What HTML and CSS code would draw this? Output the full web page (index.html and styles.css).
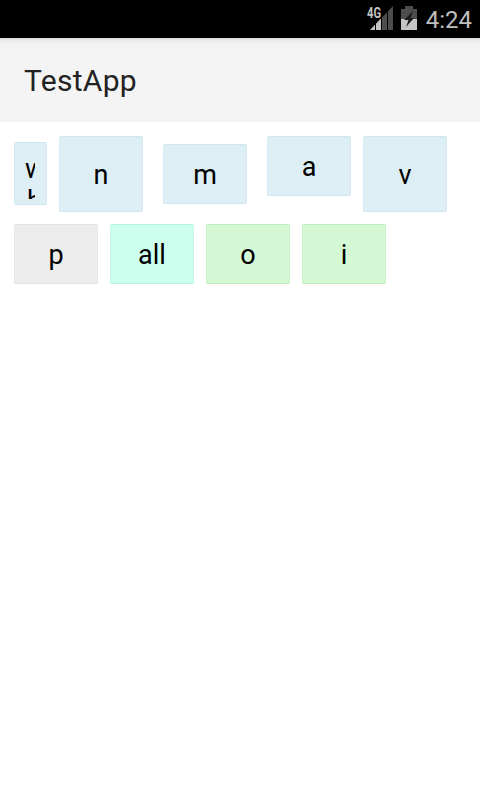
FILE: index.html
```html
<!DOCTYPE html>
<html lang="en">
<head>
<meta charset="utf-8">
<title>TestApp</title>
<link rel="stylesheet" href="styles.css">
</head>
<body>
<div class="status">
  <svg class="signal" width="28" height="26" viewBox="0 0 28 26">
    <path d="M3 25 26 1V25Z" fill="#4d4d4d"/>
    <path d="M3 25 14 13.5V25Z" fill="#c4c4c4"/>
    <path d="M8.5 17V25M14.5 11V25M20.5 6V25" stroke="#000" stroke-width="1"/>
    <text x="0" y="13" class="network" textLength="14" lengthAdjust="spacingAndGlyphs">4G</text>
  </svg>
  <svg class="battery" width="16" height="24" viewBox="0 0 16 24">
    <path d="M0 3H4V0H12V3H16V24H0Z" fill="#4d4d4d"/>
    <path d="M0 13H16V24H0Z" fill="#c4c4c4"/>
    <path d="M12 5 3 14H7.5L5 21 13 12H9.5Z" fill="#1b1b1b"/>
  </svg>
  <span class="clock">4:24</span>
</div>
<header class="bar"><h1>TestApp</h1></header>
<main>
  <div class="row top">
    <button class="btn blue narrow"><span class="clip"><span>w</span><span class="second">h</span></span></button>
    <button class="btn blue tall">n</button>
    <button class="btn blue lowered">m</button>
    <button class="btn blue">a</button>
    <button class="btn blue tall">v</button>
  </div>
  <div class="row">
    <button class="btn gray">p</button>
    <button class="btn mint">all</button>
    <button class="btn green">o</button>
    <button class="btn green">i</button>
  </div>
</main>
</body>
</html>
```
FILE: styles.css
```css
* { box-sizing: border-box; }
body { margin: 0; background: #fff; font-family: Roboto, sans-serif; color: #000; }
.status { height: 38px; background: #000; display: flex; align-items: flex-start; justify-content: flex-end; padding-right: 8px; }
.signal { margin: 5px 6px 0 0; }
.network { font: 700 14px Roboto, sans-serif; fill: #c4c4c4; stroke: #000; stroke-width: 1px; paint-order: stroke; }
.battery { margin: 6px 9px 0 0; }
.clock { font-size: 24px; line-height: 38px; color: #bebebe; height: 38px; padding-top: 1px; }
.bar { height: 84px; background: linear-gradient(#d8d8d8, #e8e8e8 2px, #f0f0f0 5px, #f4f4f4 11px); display: flex; align-items: center; padding: 2px 0 0 24px; }
h1 { margin: 0; font-size: 30px; font-weight: 400; line-height: 36px; letter-spacing: 0.3px; color: #222; }
main { padding: 14px; display: flex; flex-direction: column; gap: 12px; }
.row { display: flex; align-items: flex-start; gap: 12px; }
.top { height: 76px; }
.btn { font: 400 27px/32px Roboto, sans-serif; color: #000; width: 84px; height: 60px; padding: 2px 0 0; border: 1px solid; border-radius: 2px; flex: none; text-align: center; }
.tall { height: 76px; }
.lowered { margin: 8px 8px 0; }
.narrow { width: 33px; height: 63px; margin-top: 6px; padding: 10px 11px 5px 10px; }
.clip { display: block; width: 10px; height: 46px; overflow: hidden; text-align: left; }
.clip span { display: block; }
.clip .second { line-height: 32px; padding-left: 2px; }
.blue { background: #deeef5; border-color: #cce7ef #d4eaf2; }
.gray { background: #ececec; border-color: #e2e2e2 #e6e6e6; }
.mint { background: #ccffee; border-color: #b5f5e2 #c0faea; }
.green { background: #d4f7d4; border-color: #bcefbc #c6f3c6; }
```
